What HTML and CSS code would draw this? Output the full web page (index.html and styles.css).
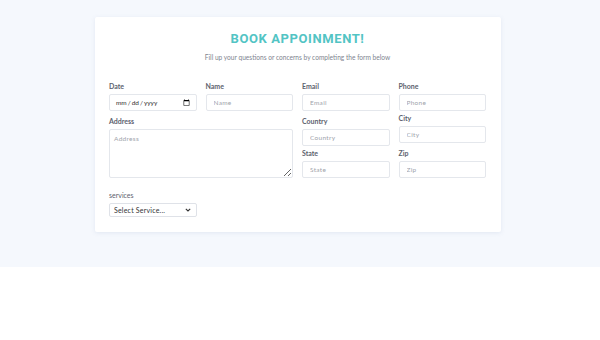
FILE: index.html
```html
<!DOCTYPE html>
<html lang="en">
  <head>
    <meta charset="UTF-8" />
    <meta name="viewport" content="width=device-width, initial-scale=1.0" />
    <title>Book Appointment</title>
    <link rel="stylesheet" href="styles.css">
  </head>
  <body>
    <section class="booking">
      <form class="booking__card">
        <h1 class="booking__title">BOOK APPOINMENT!</h1>
        <p class="booking__subtitle">Fill up your questions or concerns by completing the form below</p>

        <div class="booking__grid">
          <div class="booking__half">
            <label class="field">
              <span class="field__label">Date</span>
              <input class="field__input" type="date" />
            </label>
            <label class="field">
              <span class="field__label">Name</span>
              <input class="field__input" type="text" placeholder="Name" />
            </label>
            <label class="field field--wide">
              <span class="field__label">Address</span>
              <textarea class="field__input field__input--area" placeholder="Address"></textarea>
            </label>
          </div>

          <div class="booking__col">
            <label class="field">
              <span class="field__label">Email</span>
              <input class="field__input" type="email" placeholder="Email" />
            </label>
            <label class="field field--far">
              <span class="field__label">Country</span>
              <input class="field__input" type="text" placeholder="Country" />
            </label>
            <label class="field">
              <span class="field__label">State</span>
              <input class="field__input" type="text" placeholder="State" />
            </label>
          </div>

          <div class="booking__col">
            <label class="field">
              <span class="field__label">Phone</span>
              <input class="field__input" type="tel" placeholder="Phone" />
            </label>
            <label class="field">
              <span class="field__label">City</span>
              <input class="field__input" type="text" placeholder="City" />
            </label>
            <label class="field field--far">
              <span class="field__label">Zip</span>
              <input class="field__input" type="text" placeholder="Zip" />
            </label>
          </div>
        </div>

        <label class="field field--service">
          <span class="field__label">services</span>
          <span class="select">
            <select class="select__box">
              <option>Select Service...</option>
              <option>Consultation</option>
              <option>Check-up</option>
            </select>
            <svg class="select__arrow" width="6" height="4" viewBox="0 0 6 4">
              <path d="M0.8 0.8 L3 3 L5.2 0.8" fill="none" stroke="#333" stroke-width="1.1" />
            </svg>
          </span>
        </label>
      </form>
    </section>
  </body>
</html>
```

FILE: styles.css
```css
* {
  box-sizing: border-box;
  margin: 0;
  padding: 0;
  font-family: "Lato", "Noto Sans", sans-serif;
}
body {
  background: #fff;
  color: #4a4f5c;
}
.booking {
  background: #f5f8fd;
  height: 267px;
  padding: 17px 4px 0 0;
}
.booking__card {
  width: 406px;
  margin: 0 auto;
  padding: 14px 15px 15px 14px;
  background: #fff;
  border-radius: 2px;
  box-shadow: 0 1px 4px rgba(120, 140, 180, 0.15);
}
.booking__title {
  font-family: "Roboto", sans-serif;
  font-weight: 700;
  font-size: 13px;
  line-height: 16px;
  letter-spacing: 0.6px;
  text-align: center;
  color: #52c4c4;
}
.booking__subtitle {
  margin-top: 6px;
  font-size: 6.6px;
  line-height: 8px;
  text-align: center;
  color: #80848f;
}
.booking__grid {
  display: grid;
  grid-template-columns: repeat(4, 1fr);
  column-gap: 9px;
  margin-top: 21px;
}
.booking__half {
  grid-column: span 2;
  display: grid;
  grid-template-columns: 1fr 1fr;
  column-gap: 9px;
  row-gap: 6px;
  align-content: start;
}
.booking__col {
  display: flex;
  flex-direction: column;
  gap: 3px;
}
.field {
  display: flex;
  flex-direction: column;
  gap: 3px;
}
.field--wide {
  grid-column: span 2;
}
.booking__col .field--far {
  margin-top: 3px;
}
.field--service {
  margin-top: 13px;
  width: 88px;
}
.field__label {
  font-size: 7px;
  line-height: 9px;
  font-weight: 700;
  color: #5d626e;
}
.field--service .field__label {
  font-weight: 400;
}
.field__input {
  display: block;
  width: 100%;
  height: 17px;
  border: 1px solid #e4e7ec;
  border-radius: 2px;
  padding: 0 7px;
  font-size: 6.5px;
  color: #444;
  background: #fff;
  outline: none;
}
.field__input::placeholder {
  color: #a0a3ab;
  letter-spacing: 0.3px;
}
.field__input[type="date"] {
  color: #333;
  padding: 0 4px 0 5px;
}
.field__input--area {
  height: 49px;
  padding: 5px 4px;
  resize: vertical;
}
.select {
  position: relative;
  display: block;
}
.select__box {
  display: block;
  width: 100%;
  height: 14px;
  border: 1px solid #dfe2e8;
  border-radius: 2px;
  padding: 0 4px;
  font-size: 7px;
  color: #333;
  background: #fff;
  appearance: none;
  outline: none;
  letter-spacing: 0.2px;
}
.select__arrow {
  position: absolute;
  right: 6px;
  top: 5px;
  pointer-events: none;
}
```
